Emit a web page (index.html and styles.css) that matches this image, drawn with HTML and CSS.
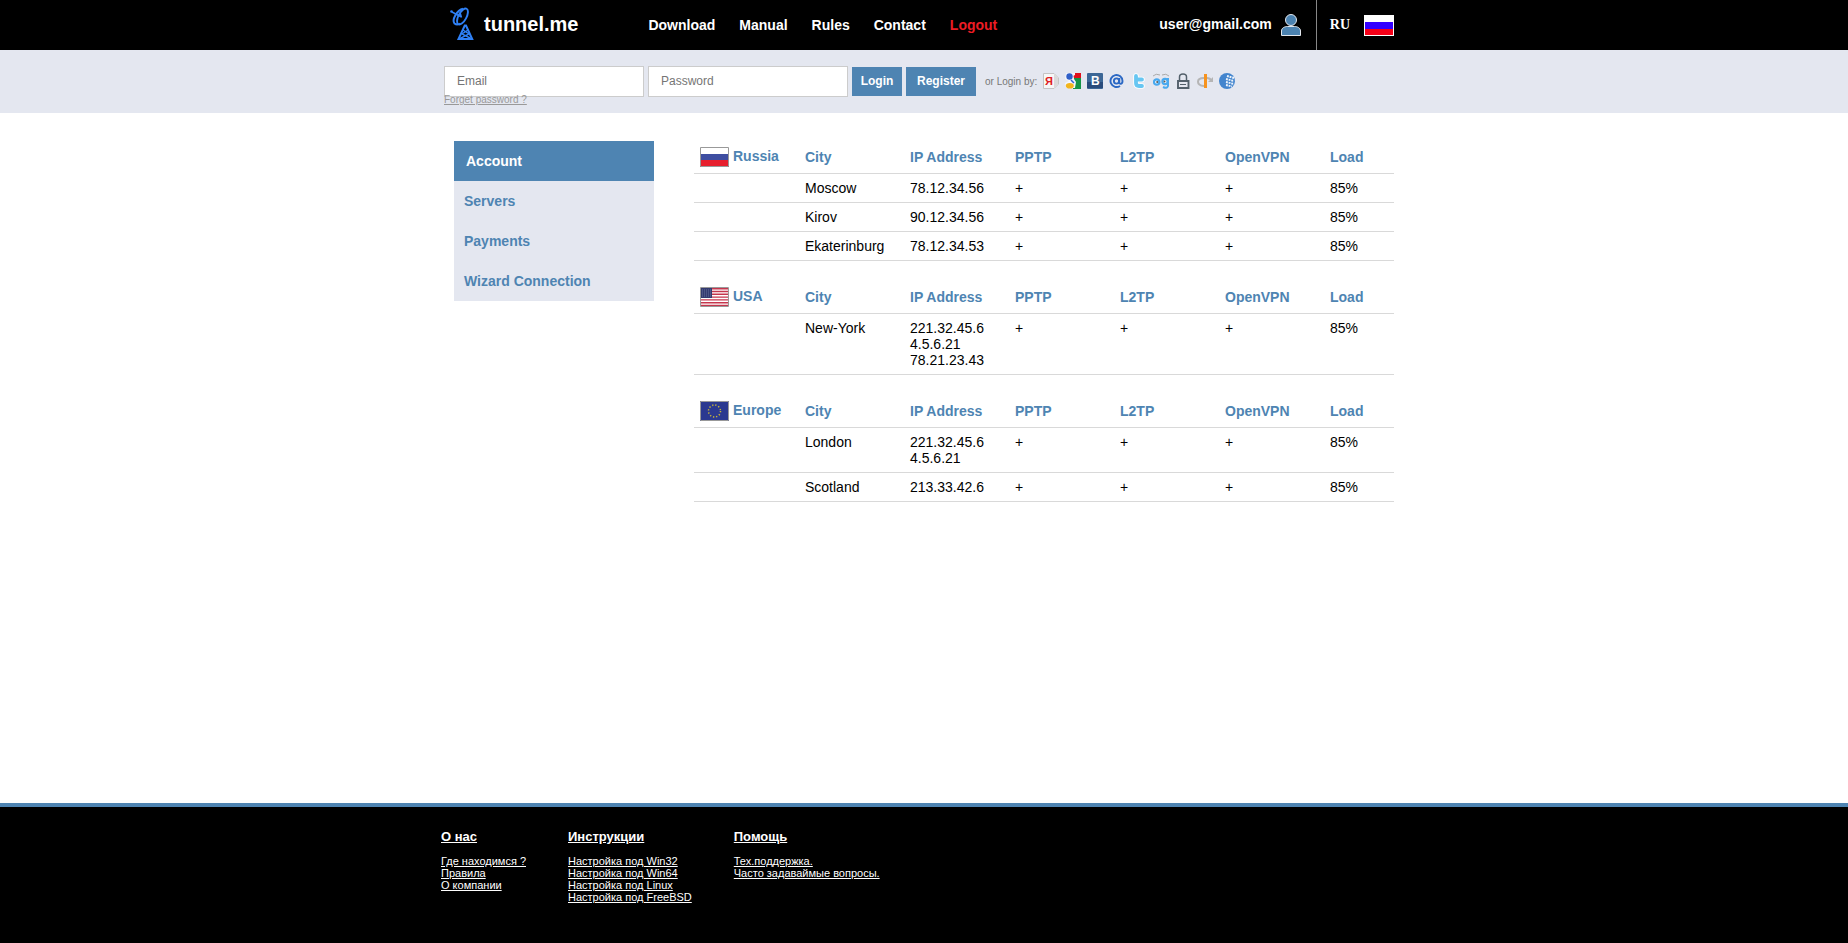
FILE: index.html
```html
<!DOCTYPE html>
<html lang="en">
<head>
<meta charset="utf-8">
<title>tunnel.me</title>
<link rel="stylesheet" href="styles.css">
</head>
<body>
<header class="header">
  <div class="wrap header-row">
    <a class="logo" href="#">
      <svg class="logo-icon" viewBox="0 0 26 34" fill="none" stroke="#2f80f5" stroke-width="1.900">
        <ellipse cx="12.500" cy="9.500" rx="4" ry="8.800" transform="rotate(28 12.500 9.500)"/>
        <path d="M13 1.800C7 3 1.500 13 4.500 16.500q2.500 2 6 0" stroke-width="2"/>
        <path d="M2 5l9.500 5M10 5.500l1.500 5" stroke-width="1.500"/>
        <circle cx="1.500" cy="4.500" r="1.300" fill="#2f80f5" stroke="none"/>
        <path d="M14.800 18.500L8.500 32h13.700L16 18.500z" stroke-width="2"/>
        <path d="M13 23l6 4-9 4.500M18 23l-6 4 9 4.500" stroke-width="1.400"/>
      </svg>
      <span>tunnel.me</span>
    </a>
    <nav class="nav">
      <a href="#">Download</a>
      <a href="#">Manual</a>
      <a href="#">Rules</a>
      <a href="#">Contact</a>
      <a href="#" class="logout">Logout</a>
    </nav>
    <a class="user" href="#">
      <span>user@gmail.com</span>
      <svg class="user-icon" viewBox="0 0 20 22" fill="#4c83b1" stroke="#e3e8ee" stroke-width="1">
        <path d="M.5 21.500V17c0-3 3-4.500 6-4.500h7c3 0 6 1.500 6 4.500v4.500z"/>
        <circle cx="10" cy="6" r="5.500"/>
      </svg>
    </a>
    <a class="lang" href="#">
      <span>RU</span>
      <svg class="lang-flag" viewBox="0 0 30 21">
        <path fill="#fff" d="M0 0h30v21H0z"/><path fill="#30f" d="M1 7h28v7H1z"/><path fill="#f60018" d="M1 14h28v6H1z"/>
      </svg>
    </a>
  </div>
</header>

<section class="login-bar">
  <form class="wrap login">
    <div class="login-row">
      <input class="field" type="email" placeholder="Email" aria-label="Email">
      <input class="field" type="password" placeholder="Password" aria-label="Password">
      <button class="btn" type="button">Login</button>
      <button class="btn btn-wide" type="button">Register</button>
      <span class="by">or Login by:</span>
      <div class="social">
        <a href="#" aria-label="Yandex"><svg viewBox="0 0 16 16"><path d="M.5.500H11L15.500 5v6L11 15.500H.500z" fill="#f7f7f7" stroke="#c4c4c4"/><path d="M11 1l4 4v6l-4 4z" fill="#dadada"/><text x="2" y="12" font-size="11" font-weight="bold" fill="#e02020">Я</text></svg></a>
        <a href="#" aria-label="Google"><svg viewBox="0 0 16 16"><path d="M8 0h8v6H9z" fill="#e0101c"/><path d="M9 5h7v11H8z" fill="#149447"/><path d="M1 0h9v2L8 3l1 3 2 3-1 6H1l-1-5 4-2-4-2z" fill="#f4f6fc"/><ellipse cx="4.500" cy="3.500" rx="3.200" ry="3.300" fill="#2f5fc8"/><ellipse cx="4.800" cy="12.700" rx="4" ry="2.800" fill="#f2b51d"/><path d="M6 7l3 3" stroke="#3064d4" stroke-width="1.500"/></svg></a>
        <a href="#" aria-label="VK"><svg viewBox="0 0 16 16"><rect width="16" height="16" rx="1" fill="#3c6796"/><path d="M0 9h16v6H0z" fill="#2a4c7c"/><text x="4" y="12" font-size="12" font-weight="bold" fill="#fff">B</text></svg></a>
        <a href="#" aria-label="Mail"><svg viewBox="0 0 16 16" fill="none" stroke="#2b68c4" stroke-width="1.900"><circle cx="7.500" cy="8" r="2.600"/><path d="M10.300 5v4.500c0 2 3.200 2 3.200-1.500a6 6 0 1 0-2.500 4.900"/></svg></a>
        <a href="#" aria-label="Twitter"><svg viewBox="0 0 16 16" fill="none" stroke-linecap="round" stroke-linejoin="round"><path d="M5 3v7q0 3 3 3h3M5 6.500h6" stroke="#fff" stroke-width="5.500"/><path d="M5 3v7q0 3 3 3h3M5 6.500h6" stroke="#67c6f2" stroke-width="3.800"/></svg></a>
        <a href="#" aria-label="Odnoklassniki"><svg viewBox="0 0 16 16" fill="none"><path d="M0 3q3-3 7-1M9 2q4-2 7 1" stroke="#aaa"/><circle cx="3.700" cy="9" r="2.700" fill="#fff" stroke="#49a9ef" stroke-width="2.200"/><circle cx="12" cy="8.500" r="2.600" fill="#fff" stroke="#49a9ef" stroke-width="2.200"/><path d="M15 5v8q-1 3-5 1" stroke="#49a9ef" stroke-width="2"/><circle cx="4.200" cy="9" r="1" fill="#555"/><circle cx="11.500" cy="8.500" r="1" fill="#555"/></svg></a>
        <a href="#" aria-label="Secure login"><svg viewBox="0 0 16 16" fill="none" stroke="#53606b"><path d="M4.500 8V4q0-3 3.500-3t3.500 3v4" stroke-width="1.500"/><path d="M3 8h10.500v7H3z" stroke-width="1.900"/><path d="M5 11.500h6" stroke-width="1"/></svg></a>
        <a href="#" aria-label="OpenID"><svg viewBox="0 0 16 16" fill="none"><path d="M7 5C-1 5-1 12 7 13M10 5q3 0 5 3" stroke="#b5b5b5" stroke-width="2"/><path d="M16 4v5h-5z" fill="#b5b5b5"/><path d="M8.500 1v14" stroke="#f7931e" stroke-width="3"/></svg></a>
        <a href="#" aria-label="WebMoney"><svg viewBox="0 0 16 16"><circle cx="8" cy="8" r="8" fill="#4385ce"/><path d="M8 3l7 2M7 6l8 2M7 9l8 2M7 12l6 1.500" stroke="#eef4fb" stroke-width="1.900" stroke-dasharray="1.900 .800" fill="none"/></svg></a>
      </div>
    </div>
    <a class="forgot" href="#">Forget password ?</a>
  </form>
</section>

<main class="wrap main">
  <nav class="side">
    <a href="#" class="active">Account</a>
    <a href="#">Servers</a>
    <a href="#">Payments</a>
    <a href="#">Wizard Connection</a>
  </nav>
  <div class="servers">
    <table class="grid">
      <thead><tr><th><span class="country"><svg class="flag" viewBox="0 0 29 20"><path fill="#fff" d="M0 0h29v20H0z"/><path fill="#3e4ea1" d="M0 7h29v6H0z"/><path fill="#e71f2d" d="M0 13h29v7H0z"/><path d="M.5.500h28v19H.500z" fill="none" stroke="#999"/></svg><span>Russia</span></span></th><th>City</th><th>IP Address</th><th>PPTP</th><th>L2TP</th><th>OpenVPN</th><th class="load">Load</th></tr></thead>
      <tbody>
        <tr><td></td><td>Moscow</td><td>78.12.34.56</td><td>+</td><td>+</td><td>+</td><td>85%</td></tr>
        <tr><td></td><td>Kirov</td><td>90.12.34.56</td><td>+</td><td>+</td><td>+</td><td>85%</td></tr>
        <tr><td></td><td>Ekaterinburg</td><td>78.12.34.53</td><td>+</td><td>+</td><td>+</td><td>85%</td></tr>
      </tbody>
    </table>
    <table class="grid">
      <thead><tr><th><span class="country"><svg class="flag" viewBox="0 0 29 20"><path fill="#fff" d="M0 0h29v20H0z"/><path stroke="#c5364d" stroke-width="1.400" d="M1 1.700h27M1 4.500h27M1 7.300h27M1 10.100h27M1 12.900h27M1 15.700h27M1 18.400h27"/><path fill="#333b70" d="M1 1h11v10H1z"/><path d="M2 3h10M2 5h10M2 7h10M2 9h10" stroke="#69709b" stroke-dasharray="1 1"/><path d="M.5.500h28v19H.500z" fill="none" stroke="#999"/></svg><span>USA</span></span></th><th>City</th><th>IP Address</th><th>PPTP</th><th>L2TP</th><th>OpenVPN</th><th class="load">Load</th></tr></thead>
      <tbody>
        <tr><td></td><td>New-York</td><td>221.32.45.6<br>4.5.6.21<br>78.21.23.43</td><td>+</td><td>+</td><td>+</td><td>85%</td></tr>
      </tbody>
    </table>
    <table class="grid">
      <thead><tr><th><span class="country"><svg class="flag" viewBox="0 0 29 20"><path fill="#2b3990" d="M0 0h29v20H0z"/><circle cx="14.500" cy="10" r="6" fill="none" stroke="#c5b43c" stroke-width="1.500" stroke-dasharray="1.300 1.842"/><path d="M.5.500h28v19H.500z" fill="none" stroke="#999"/></svg><span>Europe</span></span></th><th>City</th><th>IP Address</th><th>PPTP</th><th>L2TP</th><th>OpenVPN</th><th class="load">Load</th></tr></thead>
      <tbody>
        <tr><td></td><td>London</td><td>221.32.45.6<br>4.5.6.21</td><td>+</td><td>+</td><td>+</td><td>85%</td></tr>
        <tr><td></td><td>Scotland</td><td>213.33.42.6</td><td>+</td><td>+</td><td>+</td><td>85%</td></tr>
      </tbody>
    </table>
  </div>
</main>

<footer class="footer">
  <div class="wrap footer-cols">
    <div class="col"><a class="title" href="#">О нас</a><a href="#">Где находимся ?</a><a href="#">Правила</a><a href="#">О компании</a></div>
    <div class="col"><a class="title" href="#">Инструкции</a><a href="#">Настройка под Win32</a><a href="#">Настройка под Win64</a><a href="#">Настройка под Linux</a><a href="#">Настройка под FreeBSD</a></div>
    <div class="col"><a class="title" href="#">Помощь</a><a href="#">Тех.поддержка.</a><a href="#">Часто задаваймые вопросы.</a></div>
  </div>
</footer>
</body>
</html>
```
FILE: styles.css
```css
* { box-sizing: border-box; }
body {
  margin: 0;
  min-height: 100vh;
  display: flex;
  flex-direction: column;
  font: 14px/16px "Liberation Sans", Arial, sans-serif;
  color: #000;
  background: #fff;
}
a { color: inherit; text-decoration: none; }
svg { display: block; }
.wrap { width: 100%; max-width: 960px; margin: 0 auto; }

.header { background: #000; color: #fff; font-weight: bold; }
.header-row { display: flex; height: 50px; padding: 0 10px 0 6px; align-items: center; }
.logo { display: flex; align-items: center; gap: 8px; padding-bottom: 2px; font-size: 20px; line-height: 24px; }
.logo-icon { width: 26px; height: 34px; }
.nav { display: flex; gap: 24px; margin-left: 70px; }
.logout { color: #ed1c24; }
.user { display: flex; align-items: center; gap: 9px; margin-left: auto; padding-right: 15px; }
.user > span { padding-bottom: 2px; }
.user-icon { width: 20px; height: 22px; }
.lang {
  display: flex;
  align-items: center;
  align-self: stretch;
  gap: 14px;
  padding-left: 13px;
  border-left: 1px solid #888;
  font-family: "Liberation Serif", "Times New Roman", serif;
}
.lang-flag { width: 30px; height: 21px; }

.login-bar { background: #e4e7f0; height: 63px; }
.login { padding-top: 16px; }
.login-row { display: flex; align-items: center; gap: 4px; }
.field {
  width: 200px;
  height: 31px;
  padding: 0 12px 2px;
  border: 1px solid #ccc;
  background: #fff;
  font: 12px/16px "Liberation Sans", Arial, sans-serif;
}
.field::placeholder { color: #757575; }
.btn {
  width: 50px;
  height: 29px;
  padding: 0 0 2px;
  border: 0;
  background: #4e84b2;
  color: #fff;
  font: bold 12px/16px "Liberation Sans", Arial, sans-serif;
}
.btn-wide { width: 70px; }
.by { margin-left: 5px; font-size: 10px; line-height: 12px; color: #777; }
.social { display: flex; gap: 6px; margin-left: 2px; padding-bottom: 2px; }
.social svg { width: 16px; height: 16px; font-family: "Liberation Sans", Arial, sans-serif; }
.forgot { display: block; width: max-content; margin-top: -3px; font-size: 10px; line-height: 12px; color: #999; text-decoration: underline; }

.main { flex: 1; display: flex; align-items: flex-start; gap: 40px; padding: 28px 10px; }
.side { flex: 0 0 200px; background: #e4e7f0; color: #4e84b2; font-weight: bold; }
.side a { display: block; padding: 12px 10px; }
.side .active { padding-left: 12px; background: #4e84b2; color: #fff; }
.servers { flex: 1; display: grid; gap: 20px; }
.grid { width: 100%; table-layout: fixed; border-spacing: 0; }
.grid th, .grid td { padding: 6px; border-bottom: 1px solid #d9d9d9; text-align: left; vertical-align: top; }
.grid th { width: 15%; color: #4e84b2; vertical-align: middle; }
.grid .load { width: 10%; }
.country { display: flex; gap: 4px; line-height: 18px; }
.flag { flex: none; width: 29px; height: 20px; }

.footer { height: 140px; border-top: 4px solid #4e84b2; background: #000; color: #fff; }
.footer-cols { display: flex; gap: 42px; max-width: 966px; padding-top: 22px; }
.col { font-size: 11px; line-height: 12px; }
.col a { display: block; width: max-content; text-decoration: underline; }
.col .title { margin-bottom: 10px; font-size: 13px; line-height: 16px; font-weight: bold; }
```
